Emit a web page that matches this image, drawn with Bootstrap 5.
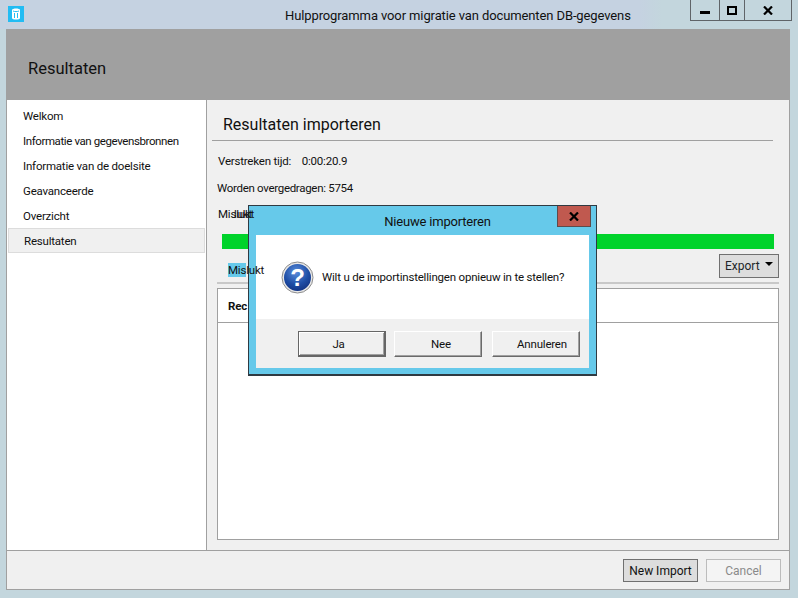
<!DOCTYPE html>
<html lang="nl">
<head>
    <meta charset="UTF-8">
    <meta name="viewport" content="width=device-width, initial-scale=1">
    <title>Hulpprogramma voor migratie van documenten DB-gegevens</title>
    <link href="https://cdn.jsdelivr.net/npm/bootstrap@5.3.0/dist/css/bootstrap.min.css" rel="stylesheet">
    <style>
        html, body { height: 100%; }
        body {
            width: 798px;
            height: 598px;
            overflow: hidden;
            position: relative;
            margin: 0;
            font-family: Roboto, "Noto Sans", sans-serif;
            font-size: 11.5px;
            letter-spacing: -.2px;
            line-height: 16px;
            color: #111;
            background: #c3d6dd;
        }

        .title-strip {
            height: 29px;
            padding-left: 8px;
            background: linear-gradient(90deg, #c5d2e1 0, #c5d2e1 640px, #c3d6dd 662px);
        }
        .app-icon { width: 16px; height: 16px; margin-top: 6px; }
        .title-text {
            position: absolute;
            left: 285px;
            top: 8px;
            font-size: 13px;
            letter-spacing: -.11px;
        }
        .win-controls {
            margin-left: auto;
            margin-right: 6px;
            height: 21px;
            border: solid #5f6468;
            border-width: 0 1px 1px;
        }
        .win-btn { display: flex; align-items: center; justify-content: center; height: 20px; }
        .win-min { width: 28px; }
        .win-max { width: 26px; border-left: 1px solid #5f6468; border-right: 1px solid #5f6468; }
        .win-close { width: 46px; }

        .app-window {
            width: 784px;
            height: 561px;
            margin-left: 6px;
            background: #f0f0f0;
            border-right: 1px solid #a0a0a0;
            border-bottom: 1px solid #a0a0a0;
            border-left: 1px solid #a0a0a0;
        }
        .page-head {
            height: 71px;
            padding: 30px 0 0 21px;
            background: #a0a0a0;
            font-size: 16.5px;
            letter-spacing: 0;
            line-height: 20px;
        }
        .app-body { height: 450px; }
        .side-nav {
            width: 200px;
            padding: 3px 1px 0;
            background: #fff;
            border-right: 1px solid #a0a0a0;
        }
        .side-item { height: 25px; padding: 5px 0 0 15px; }
        .side-item.is-wide { letter-spacing: -.4px; }
        .side-item.is-on {
            padding-left: 15px;
            background: #f0f0f0;
            border: 1px solid #dcdcdc;
            padding-top: 4px;
        }

        .main-pane { padding: 0 10px 0 10px; position: relative; }
        .pane-title {
            height: 41px;
            margin: 0 6px 0 -5px;
            padding: 15px 0 0 11px;
            border-bottom: 1px solid #a0a0a0;
            font-size: 16px;
            letter-spacing: 0;
            line-height: 20px;
        }
        .info-row { height: 26px; padding-left: 1px; }
        .info-row.first { padding-top: 12px; height: 39px; }
        .info-row.moved { padding-left: 0; letter-spacing: -.3px; }
        .info-row.fail-row { height: 28px; }
        .info-row .gap-val { margin-left: 8px; }
        .fail-a { position: relative; z-index: 20; }
        .fail-b { position: relative; z-index: 20; margin-left: -20px; }

        .green-bar { height: 15px; margin: 0 5px 0 5px; background: #00d32b; }
        .tool-row { height: 33px; padding: 5px 0 0 0; }
        .fail-tab { position: relative; z-index: 20; margin: 8px 0 0 11px; height: 16px; }
        .fail-tab .hit { background: #66c9ea; }
        .export-btn {
            width: 60px;
            height: 24px;
            margin-left: auto;
            background: #ddd;
            border: 1px solid #707070;
            border-radius: 0;
            padding: 0 0 0 5px;
            font-size: 12px;
            text-align: left;
            position: relative;
        }
        .export-btn::after {
            content: "";
            position: absolute;
            right: 5px;
            top: 7px;
            border-left: 4px solid transparent;
            border-right: 4px solid transparent;
            border-top: 4px solid #000;
        }
        .split-line { height: 2px; background: #c8c8c8; }
        .log-box {
            height: 252px;
            margin-top: 4px;
            background: #fff;
            border: 1px solid #a0a0a0;
        }
        .log-head {
            height: 34px;
            padding: 9px 0 0 10px;
            border-bottom: 1px solid #a0a0a0;
            font-weight: 700;
        }

        .foot-bar {
            height: 39px;
            padding: 8px 8px 0 0;
            border-top: 1px solid #a0a0a0;
        }
        .plain-btn {
            width: 75px;
            height: 23px;
            padding: 0;
            border-radius: 0;
            font-size: 12px;
            letter-spacing: 0;
            line-height: 18px;
            color: #111;
        }
        .plain-btn.is-main { background: #ddd; border: 1px solid #707070; }
        .plain-btn.is-off { background: #f4f4f4; border: 1px solid #bcbcbc; color: #8a8a8a; opacity: 1; }

        .msg-dialog {
            position: absolute;
            left: 248px;
            top: 205px;
            width: 349px;
            height: 171px;
            z-index: 10;
            background: #66c9ea;
            border: 1px solid #2f3a42;
            border-bottom-width: 2px;
            padding: 0 7px 7px;
        }
        .msg-title { height: 29px; padding: 8px 0 0 30px; text-align: center; font-size: 13px; }
        .msg-close {
            position: absolute;
            right: 5px;
            top: 0;
            width: 34px;
            height: 21px;
            background: #c0594f;
            border: solid #5f4a4a;
            border-width: 0 1px 1px;
        }
        .msg-body { height: 84px; padding: 26px 0 0 25px; background: #fff; }
        .msg-text { margin: 8px 0 0 8px; }
        .msg-foot { height: 49px; padding: 12px 9px 0 0; background: #f0f0f0; }
        .ask-btn {
            width: 88px;
            height: 26px;
            padding: 0;
            border-radius: 0;
            font-size: 11.5px;
            letter-spacing: -.2px;
            line-height: 20px;
            color: #111;
            background: #f0f0f0;
            border: 1px solid;
            border-color: #fff #6a6a6a #6a6a6a #fff;
            box-shadow: inset -1px -1px 0 #a0a0a0;
        }
        .ask-btn.is-main {
            border: 2px solid #666;
            border-width: 1px 2px 2px 1px;
            box-shadow: inset 1px 1px 0 #fff, inset -1px -1px 0 #a0a0a0;
            padding-right: 6px;
        }
        .ask-gap { margin-right: 10px; padding-left: 6px; }
        .ask-last { padding-left: 12px; }
    </style>
</head>
<body>

<div class="title-strip d-flex align-items-start">
    <svg class="app-icon" viewBox="0 0 16 16">
        <rect width="16" height="16" fill="#22bcf3"/>
        <path d="M4 4c0-2 8-2 8 0v8c0 2-8 2-8 0z" fill="#fff"/>
        <path d="M5 5c1.500.8 4.500.8 6 0M6.500 7v5M9.500 7v5" fill="none" stroke="#22bcf3" stroke-width="1"/>
    </svg>
    <span class="title-text">Hulpprogramma voor migratie van documenten DB-gegevens</span>
    <div class="win-controls d-flex">
        <div class="win-btn win-min">
            <svg width="10" height="10" viewBox="0 0 10 10"><rect y="6" width="10" height="3" fill="#000"/></svg>
        </div>
        <div class="win-btn win-max">
            <svg width="10" height="9" viewBox="0 0 10 9"><path d="M1 1h8v7H1z" fill="none" stroke="#000" stroke-width="2"/></svg>
        </div>
        <div class="win-btn win-close">
            <svg width="10" height="9" viewBox="0 0 10 9"><path d="M1 .5l8 8M9 .5l-8 8" stroke="#000" stroke-width="2.200" fill="none"/></svg>
        </div>
    </div>
</div>

<div class="app-window d-flex flex-column">
    <div class="page-head">Resultaten</div>

    <div class="app-body d-flex">
        <div class="side-nav flex-shrink-0">
            <div class="side-item">Welkom</div>
            <div class="side-item is-wide">Informatie van gegevensbronnen</div>
            <div class="side-item">Informatie van de doelsite</div>
            <div class="side-item">Geavanceerde</div>
            <div class="side-item">Overzicht</div>
            <div class="side-item is-on">Resultaten</div>
        </div>

        <div class="main-pane flex-grow-1">
            <div class="pane-title">Resultaten importeren</div>
            <div class="info-row first">Verstreken tijd: <span class="gap-val">0:00:20.9</span></div>
            <div class="info-row moved">Worden overgedragen: 5754</div>
            <div class="info-row fail-row"><span class="fail-a">Mislukt</span><span class="fail-b">lukt</span></div>
            <div class="green-bar"></div>
            <div class="tool-row d-flex">
                <div class="fail-tab"><span class="hit">Mis</span>lukt</div>
                <button class="btn export-btn" type="button">Export</button>
            </div>
            <div class="split-line"></div>
            <div class="log-box">
                <div class="log-head">Rec</div>
            </div>
        </div>
    </div>

    <div class="foot-bar d-flex justify-content-end gap-2">
        <button class="btn plain-btn is-main" type="button">New Import</button>
        <button class="btn plain-btn is-off" type="button" disabled>Cancel</button>
    </div>
</div>

<div class="msg-dialog">
    <div class="msg-title">Nieuwe importeren</div>
    <div class="msg-close d-flex align-items-center justify-content-center">
        <svg width="10" height="9" viewBox="0 0 10 9"><path d="M1 .5l8 8M9 .5l-8 8" stroke="#000" stroke-width="2.200" fill="none"/></svg>
    </div>
    <div class="msg-body d-flex">
        <svg width="33" height="33" viewBox="0 0 33 33" class="flex-shrink-0">
            <defs>
                <radialGradient id="askFill" cx="45%" cy="30%" r="75%">
                    <stop offset="0" stop-color="#5b8fdc"/>
                    <stop offset=".6" stop-color="#1f4ea6"/>
                    <stop offset="1" stop-color="#12317f"/>
                </radialGradient>
            </defs>
            <circle cx="16.500" cy="16.500" r="15.500" fill="#e8e8e8" stroke="#8c8c8c"/>
            <circle cx="16.500" cy="16.500" r="13.500" fill="url(#askFill)"/>
            <text x="16.500" y="25" text-anchor="middle" font-family="Liberation Sans, sans-serif" font-weight="700" font-size="24" letter-spacing="0" fill="#fff">?</text>
        </svg>
        <div class="msg-text">Wilt u de importinstellingen opnieuw in te stellen?</div>
    </div>
    <div class="msg-foot d-flex justify-content-end">
        <button class="btn ask-btn is-main me-2" type="button">Ja</button>
        <button class="btn ask-btn ask-gap" type="button">Nee</button>
        <button class="btn ask-btn ask-last" type="button">Annuleren</button>
    </div>
</div>

<script src="https://cdn.jsdelivr.net/npm/bootstrap@5.3.0/dist/js/bootstrap.bundle.min.js"></script>
</body>
</html>
